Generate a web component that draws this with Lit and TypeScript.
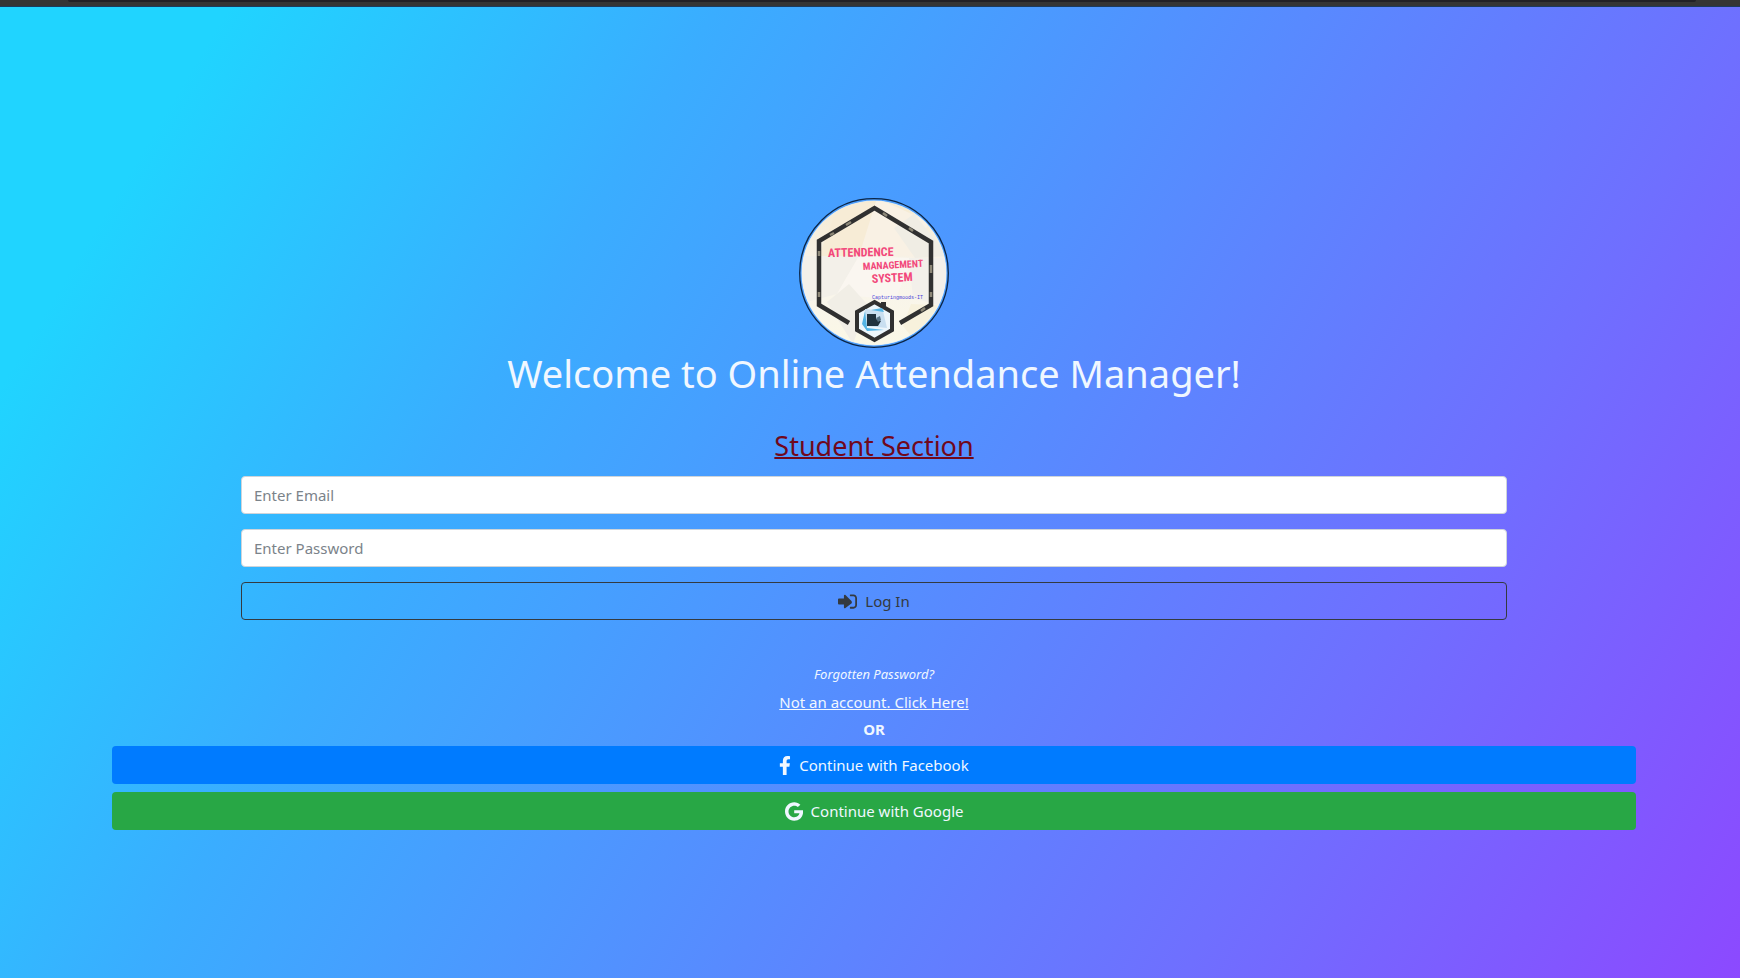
import { LitElement, html, css } from "lit";
import { customElement } from "lit/decorators.js";

const signInIcon = html`<svg class="icon" viewBox="0 0 512 512" aria-hidden="true"><path d="M416 448h-84c-6.600 0-12-5.400-12-12v-24c0-6.600 5.400-12 12-12h84c26 0 48-22 48-48V160c0-26-22-48-48-48h-84c-6.600 0-12-5.400-12-12V76c0-6.600 5.400-12 12-12h84c53 0 96 43 96 96v192c0 53-43 96-96 96zm-47-201L201 79c-15-15-41-4.500-41 17v80H24c-13.300 0-24 10.700-24 24v112c0 13.300 10.700 24 24 24h136v80c0 21.500 26 32 41 17l168-132c9.300-9.400 9.300-24.600 0-34z"/></svg>`;

const facebookIcon = html`<svg class="icon" viewBox="0 0 320 512" aria-hidden="true"><path d="M279.140 288l14.220-92.660h-88.910v-60.130c0-25.350 12.420-50.060 52.240-50.060h40.420V6.260S260.430 0 225.360 0c-73.220 0-121.080 44.380-121.080 124.720v70.620H22.890V288h81.390v224h100.170V288z"/></svg>`;

const googleIcon = html`<svg class="icon" viewBox="0 0 488 512" aria-hidden="true"><path d="M488 261.800C488 403.300 391.100 504 248 504 110.800 504 0 393.200 0 256S110.800 8 248 8c66.800 0 123 24.500 166.300 64.900l-67.500 64.900C258.500 52.600 94.300 116.600 94.300 256c0 86.500 69.100 156.600 153.700 156.600 98.200 0 135-70.400 140.800-106.900H248v-85.300h236.100c2.300 12.700 3.900 24.900 3.900 41.400z"/></svg>`;

@customElement("attendance-logo")
class AttendanceLogo extends LitElement {
  static styles = css`
    :host { display: block; }
    svg { display: block; width: 150px; height: 150px; }
    .title { font: bold 12px "Roboto Condensed", Roboto, sans-serif; fill: #f2487b; }
    .title.long { font-size: 10px; }
    .tag { font: 5px "Liberation Mono", monospace; fill: #4a43d8; }
  `;

  render() {
    return html`<svg viewBox="0 0 150 150" role="img" aria-label="Attendence Management System">
      <defs>
        <clipPath id="disc"><circle cx="75" cy="75" r="72"/></clipPath>
        <linearGradient id="paper" x1="0" y1="0" x2="0" y2="1">
          <stop offset="0" stop-color="#f6ead0"/><stop offset=".5" stop-color="#f8f4ec"/><stop offset="1" stop-color="#fbf8e6"/>
        </linearGradient>
      </defs>
      <circle cx="75" cy="75" r="74.300" fill="#4c9cf8" stroke="#0b2546" stroke-width="1.300"/>
      <circle cx="75" cy="75" r="72.500" fill="#d6ecff"/>
      <g clip-path="url(#disc)">
        <rect width="150" height="150" fill="url(#paper)"/>
        <path d="M40 5h38L60 58H20z" fill="#f7ecd6"/>
        <path d="M78 0l-18 58h54l16-34z" fill="#f9f1e4"/>
        <path d="M95 30l20-14 35 42-34 2z" fill="#f0ede4"/>
        <path d="M0 58h60l-22 38-38 10z" fill="#f3f0e9"/>
        <path d="M60 58l54 2-18 42-58-6z" fill="#faf6f0"/>
        <path d="M28 104l22-18 18 20-14 40z" fill="#f1eee6"/>
        <path d="M110 60h40v50l-36-10z" fill="#f3f0ea"/>
        <path d="M112 106l38 2-30 40-16-20z" fill="#f7f1dc"/>
      </g>
      <path d="M50 125L20 107V43L75.500 10 132 44v63l-31 18" fill="none" stroke="#303030" stroke-width="4.500"/>
      <path d="M47 27l5-3M31 37l4-2M84 15l4 3M110 30l4 3M20 53v5M20 94v5M132 67v8M132 94v5M122 113l4-3" fill="none" stroke="#8d8878" stroke-width="2.500"/>
      <text class="title" x="29" y="59" transform="rotate(-1 29 59)">ATTENDENCE</text>
      <text class="title long" x="64" y="72" transform="rotate(-3 64 72)">MANAGEMENT</text>
      <text class="title" x="73" y="85" transform="rotate(-3 73 85)">SYSTEM</text>
      <text class="tag" x="73" y="101">Capturingmoods-IT</text>
      <path d="M75.500 104L93 114v18l-17.500 10L58 132v-18z" fill="#edf6fb" stroke="#303030" stroke-width="4"/>
      <path d="M82 104h5v6l-5-2z" fill="#303030"/>
      <path d="M66 111l18 2 4 17-22-2z" fill="#c9dff0"/>
      <path d="M63 126l3-13 2 17 17 2-17 1zM72 112l11-2 2 4z" fill="#54b4e4"/>
      <path d="M68 116h9v5l5 2-3 5H68z" fill="#20323e"/>
      <path d="M77 120l4-2 1 4-3 2z" fill="#587486"/>
    </svg>`;
  }
}

@customElement("app-root")
class AppRoot extends LitElement {
  static styles = css`
    :host {
      display: flex;
      flex-direction: column;
      min-height: 100vh;
      font: 15px/24px "Noto Sans", sans-serif;
      color: #f0f7ff;
      background: linear-gradient(121deg, #20d4ff 10%, #3aadff 31%, #6f6fff 76%, #8c49ff 100%);
    }
    * { box-sizing: border-box; }
    .edge { height: 7px; padding: 0 44px 0 68px; background: #353535; border-bottom: 1px solid #1d3a5c; }
    .edge-bar { height: 2px; background: #222126; border-radius: 0 0 4px 4px; }
    main {
      flex: 1;
      display: flex;
      flex-direction: column;
      align-items: center;
      padding: 191px 104px 0 112px;
      text-align: center;
    }
    h1 { margin: 1px 0 32px; font-size: 38px; line-height: 48px; font-weight: 400; }
    h2 { margin: 0 0 13px; font-size: 27px; line-height: 34px; font-weight: 400; color: #70081c; text-decoration: underline; text-decoration-thickness: 2px; }
    form { align-self: stretch; display: grid; gap: 15px; padding: 0 129px; }
    input {
      height: 38px; padding: 6px 12px; border: 1px solid #ced4da; border-radius: 4px;
      background: #fff; color: #495057; font: inherit; width: 100%;
    }
    input::placeholder { color: #7b838a; opacity: 1; }
    button {
      display: flex; align-items: center; justify-content: center; gap: 8px;
      height: 38px; width: 100%; border: 1px solid transparent; border-radius: 4px;
      font: inherit; color: #f0f7ff; cursor: pointer;
    }
    .login { background: transparent; border-color: #343a40; color: #343a40; }
    .icon { height: 19px; fill: currentColor; flex: none; }
    .links { display: grid; justify-items: center; padding: 40px 0 4px; }
    a { color: inherit; }
    .forgot { font-size: 13px; line-height: 28px; font-style: italic; text-decoration: none; }
    .signup { line-height: 28px; }
    .or { font-weight: 700; line-height: 26px; }
    .social { align-self: stretch; display: grid; gap: 8px; }
    .facebook { background: #007bff; }
    .google { background: #28a745; }
  `;

  render() {
    return html`
      <div class="edge"><div class="edge-bar"></div></div>
      <main>
        <attendance-logo></attendance-logo>
        <h1>Welcome to Online Attendance Manager!</h1>
        <h2>Student Section</h2>
        <form @submit=${(e: Event) => e.preventDefault()}>
          <input type="email" aria-label="Enter Email" placeholder="Enter Email">
          <input type="password" aria-label="Enter Password" placeholder="Enter Password">
          <button class="login" type="submit">${signInIcon}<span>Log In</span></button>
        </form>
        <div class="links">
          <a class="forgot" href="#forgot">Forgotten Password?</a>
          <a class="signup" href="#signup">Not an account. Click Here!</a>
          <span class="or">OR</span>
        </div>
        <div class="social">
          <button class="facebook" type="button">${facebookIcon}<span>Continue with Facebook</span></button>
          <button class="google" type="button">${googleIcon}<span>Continue with Google</span></button>
        </div>
      </main>
    `;
  }
}
